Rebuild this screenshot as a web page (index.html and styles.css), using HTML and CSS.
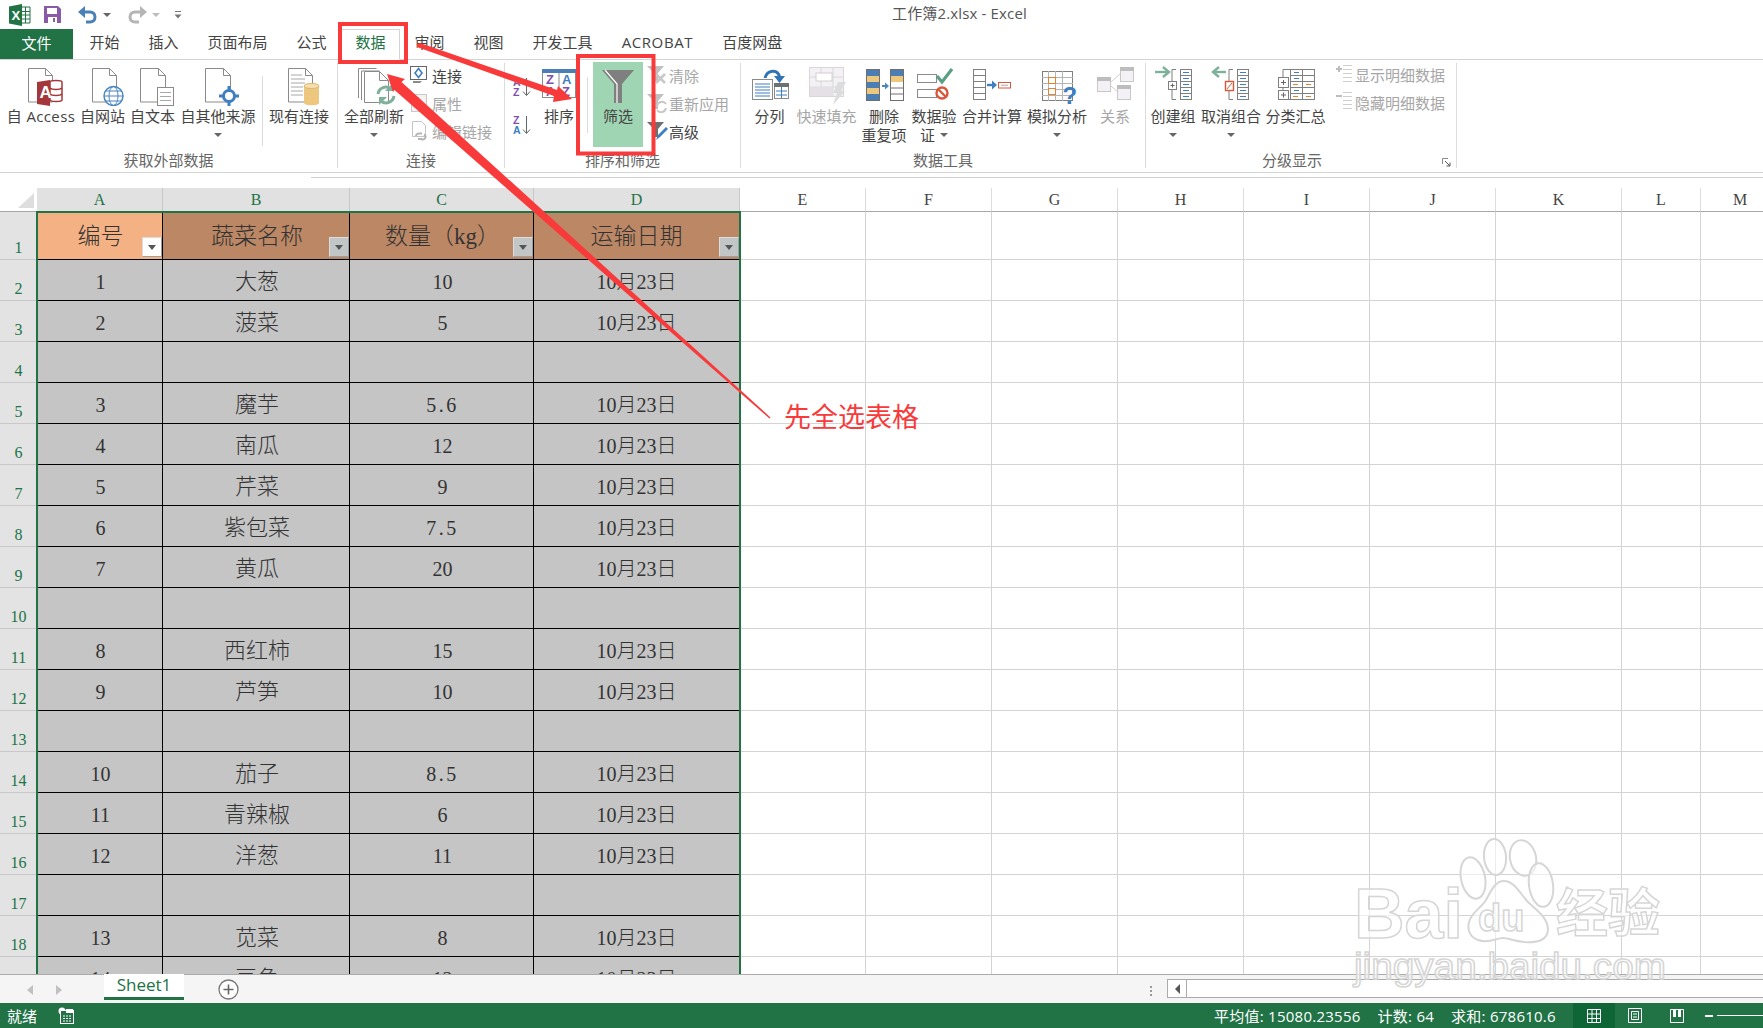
FILE: index.html
```html
<!DOCTYPE html>
<html lang="zh-CN">
<head>
<meta charset="utf-8">
<title>工作簿2.xlsx - Excel</title>
<link rel="stylesheet" href="styles.css">
</head>
<body>
<div class="app">
  <header class="titlebar">
    <div class="qat">
      <svg class="q-excel" width="22" height="22" viewBox="0 0 22 22"><path d="M0 2.5 13 0v22L0 19.500z" fill="#217346"/><path d="M13 3h8v16h-8" fill="#fff" stroke="#217346"/><path d="M13 7.500h8M13 11h8M13 15h8M16.500 3v16" stroke="#217346" fill="none"/><text x="2.500" y="15.500" class="x-mark">X</text></svg>
      <svg class="q-save" width="17" height="17" viewBox="0 0 17 17"><path d="M0 0h14l3 3v14H0z" fill="#8a5aa8"/><rect x="3" y="2" width="10" height="6" fill="#fff"/><rect x="4" y="11" width="9" height="6" fill="#fff"/><rect x="9" y="12" width="2" height="4" fill="#8a5aa8"/></svg>
      <svg class="q-undo" width="20" height="18" viewBox="0 0 20 18"><path d="M4 6h8c3 0 5 2 5 5s-2 5-5 5H8" fill="none" stroke="#4a80b8" stroke-width="3"/><path d="M7 0v12L0 6z" fill="#4a80b8"/></svg>
      <span class="mini-caret"></span>
      <svg class="q-redo" width="20" height="18" viewBox="0 0 20 18"><path d="M16 6H8c-3 0-5 2-5 5s2 5 5 5h4" fill="none" stroke="#b5b5b5" stroke-width="3"/><path d="M13 0v12l7-6z" fill="#b5b5b5"/></svg>
      <span class="mini-caret mini-caret-off"></span>
      <svg class="q-more" width="10" height="10" viewBox="0 0 10 10"><path d="M2 1.500h6" stroke="#777" fill="none"/><path d="M1.500 4.500h7L5 8.500z" fill="#777"/></svg>
    </div>
    <div class="title">工作簿2.xlsx - Excel</div>
  </header>

  <nav class="tabs">
    <span class="tab-file">文件</span>
    <span class="tab">开始</span>
    <span class="tab">插入</span>
    <span class="tab">页面布局</span>
    <span class="tab">公式</span>
    <span class="tab tab-active">数据</span>
    <span class="tab">审阅</span>
    <span class="tab">视图</span>
    <span class="tab">开发工具</span>
    <span class="tab tab-latin">ACROBAT</span>
    <span class="tab">百度网盘</span>
  </nav>

  <section class="ribbon">
    <div class="group g1">
      <div class="group-body">
        <div class="big w76">
          <svg width="44" height="40" viewBox="0 0 44 40"><path d="M9.500 2.500h17l7 7v26.500h-24z" fill="#fff" stroke="#8a8a8a"/><path d="M26.500 2.500v7h7" fill="none" stroke="#8a8a8a"/><path d="M31 16c0-2 12-2 12 0v18c0 2-12 2-12 0z" fill="#fff" stroke="#a4373a" stroke-width="1.500"/><path d="M31 22c2 2 10 2 12 0M31 28c2 2 10 2 12 0" fill="none" stroke="#a4373a" stroke-width="1.500"/><path d="M18 16l13-2v26l-13-2z" fill="#a4373a"/><text x="20.500" y="32" class="a-mark">A</text></svg>
          <span class="lbl lbl-latin">自 Access</span>
        </div>
        <div class="big w47">
          <svg width="44" height="40" viewBox="0 0 44 40"><path d="M11.500 2.500h17l7 7v26.500h-24z" fill="#fff" stroke="#8a8a8a"/><path d="M28.500 2.500v7h7" fill="none" stroke="#8a8a8a"/><circle cx="32.500" cy="30" r="9.500" fill="#fff" stroke="#4a86c0" stroke-width="1.500"/><ellipse cx="32.500" cy="30" rx="4.500" ry="9.500" fill="none" stroke="#4a86c0"/><path d="M23 30h19M24.500 25h16M24.500 35h16" stroke="#4a86c0" fill="none"/></svg>
          <span class="lbl">自网站</span>
        </div>
        <div class="big w53">
          <svg width="44" height="40" viewBox="0 0 44 40"><path d="M9.500 2.500h18l7 7v26.500h-25z" fill="#fff" stroke="#8a8a8a"/><path d="M27.500 2.500v7h7" fill="none" stroke="#8a8a8a"/><rect x="26.500" y="21.500" width="16" height="18" fill="#fff" stroke="#8a8a8a"/><path d="M29 26.500h11M29 30.500h11M29 34.500h11" stroke="#a8a8a8" fill="none"/></svg>
          <span class="lbl">自文本</span>
        </div>
        <div class="big w78">
          <svg width="44" height="40" viewBox="0 0 44 40"><path d="M9.500 2.500h18l7 7v26.500h-25z" fill="#fff" stroke="#8a8a8a"/><path d="M27.500 2.500v7h7" fill="none" stroke="#8a8a8a"/><circle cx="33" cy="30" r="5.500" fill="#fff" stroke="#3f7fbf" stroke-width="3"/><path d="M33 20v4M33 36v4M23 30h4M39 30h4" stroke="#3f7fbf" stroke-width="3" fill="none"/></svg>
          <span class="lbl">自其他来源</span>
          <span class="line2"><span class="caret"></span></span>
        </div>
        <span class="vsep sep1"></span>
        <div class="big w66">
          <svg width="44" height="40" viewBox="0 0 44 40"><path d="M11.500 2.500h17l7 7v26.500h-24z" fill="#fff" stroke="#8a8a8a"/><path d="M28.500 2.500v7h7" fill="none" stroke="#8a8a8a"/><path d="M14 9h11M14 13h14M14 17h14M14 21h12M14 25h12M14 29h12" stroke="#a8a8a8" fill="none"/><path d="M27 20c0-4 15-4 15 0v17c0 3-15 3-15 0z" fill="#eec77e"/><ellipse cx="34.500" cy="20" rx="7.500" ry="2.500" fill="#f6dfae" stroke="#c9a45f" stroke-width=".6"/></svg>
          <span class="lbl">现有连接</span>
        </div>
      </div>
      <div class="group-label">获取外部数据</div>
    </div>

    <div class="group g2">
      <div class="group-body">
        <div class="big w72">
          <svg width="44" height="40" viewBox="0 0 44 40"><path d="M6.500 32V2.500h18M9.500 34V5h18" fill="none" stroke="#8a8a8a"/><path d="M12.500 5.500h15l9 9v22h-24z" fill="#fff" stroke="#8a8a8a"/><path d="M27.500 5.500v9h9" fill="none" stroke="#8a8a8a"/><path d="M26 28a8 8 0 0 1 13-5" fill="none" stroke="#7fb09a" stroke-width="3"/><path d="M42 30a8 8 0 0 1-13 5" fill="none" stroke="#7fb09a" stroke-width="3"/><path d="M41 17v8h-8zM27 39v-8h8z" fill="#7fb09a"/></svg>
          <span class="lbl">全部刷新</span>
          <span class="line2"><span class="caret"></span></span>
        </div>
        <div class="small-col">
          <div class="small">
            <svg width="19" height="20" viewBox="0 0 19 20"><rect x=".5" y="1.500" width="16" height="13" fill="#fff" stroke="#666"/><path d="M3 16h9l-2 2H3z" fill="#8a8a8a"/><path d="M8.500 3.500l3.500 4.500-3.500 4.500L5 8z" fill="#fff" stroke="#3f7fbf" stroke-width="1.600"/></svg>
            <span>连接</span>
          </div>
          <div class="small off">
            <svg width="19" height="20" viewBox="0 0 19 20"><rect x="1.500" y="1.500" width="15" height="17" fill="#f2f2f2" stroke="#c8c8c8"/><rect x="4" y="4" width="5" height="4" fill="#bdbdbd"/><path d="M4 11h10M4 14h10" stroke="#c8c8c8" fill="none"/></svg>
            <span>属性</span>
          </div>
          <div class="small off">
            <svg width="19" height="20" viewBox="0 0 19 20"><path d="M2.500.5h9l4 4v11h-13z" fill="#fff" stroke="#c4c4c4"/><path d="M6 15a3 2.500 0 0 1 3-2.500h3M14 13.500a3 2.500 0 0 1-3 4.500H8" fill="none" stroke="#b5b5b5" stroke-width="2"/></svg>
            <span>编辑链接</span>
          </div>
        </div>
      </div>
      <div class="group-label">连接</div>
    </div>

    <div class="group g3">
      <div class="group-body">
        <div class="sort-col">
          <svg width="18" height="20" viewBox="0 0 18 20"><text x="0" y="9" class="az az-v">A</text><text x="0" y="19" class="az az-p">Z</text><path d="M13.500 1v17M10 14.500l3.500 4 3.500-4" fill="none" stroke="#666"/></svg>
          <svg width="18" height="20" viewBox="0 0 18 20"><text x="0" y="9" class="az az-p">Z</text><text x="0" y="19" class="az az-b">A</text><path d="M13.500 1v17M10 14.500l3.500 4 3.500-4" fill="none" stroke="#666"/></svg>
        </div>
        <div class="big w56">
          <svg width="36" height="40" viewBox="0 0 36 40"><rect x="1.500" y="3.500" width="33" height="28" fill="#fff" stroke="#8a8a8a"/><rect x="1" y="3" width="34" height="4" fill="#4a7eb5"/><path d="M18 7v25" stroke="#8a8a8a" fill="none"/><text x="5" y="18" class="az2 az-p">Z</text><text x="5" y="30" class="az2 az-v">A</text><text x="21" y="18" class="az2 az-b">A</text><text x="21" y="30" class="az2 az-p">Z</text></svg>
          <span class="lbl">排序</span>
        </div>
        <span class="vsep sep2"></span>
        <div class="big filter-on">
          <svg width="34" height="40" viewBox="0 0 34 40"><path d="M1 4h32L21 18v19h-8V18z" fill="#7f7f7f"/><path d="M4 4l12 14v19M17 18" fill="none" stroke="#fff" stroke-width="1.200"/></svg>
          <span class="lbl">筛选</span>
        </div>
        <div class="small-col col3">
          <div class="small off s3">
            <svg width="23" height="20" viewBox="0 0 23 20"><path d="M1 1h17l-6 7v8h-4V8z" fill="#c0c0c0"/><path d="M10 9l9 9M19 9l-9 9" stroke="#c8c8c8" stroke-width="2.500" fill="none"/></svg>
            <span>清除</span>
          </div>
          <div class="small off s3">
            <svg width="23" height="20" viewBox="0 0 23 20"><path d="M1 1h17l-6 7v8h-4V8z" fill="#c0c0c0"/><path d="M11 13a5 5 0 0 1 9-2M20 15a5 5 0 0 1-9 2" stroke="#c8c8c8" stroke-width="2" fill="none"/></svg>
            <span>重新应用</span>
          </div>
          <div class="small s3">
            <svg width="23" height="20" viewBox="0 0 23 20"><path d="M1 1h17l-6 7v8h-4V8z" fill="#6f6f6f"/><path d="M10 19l2-5 8-8 2 2-8 8z" fill="#3f7fbf"/></svg>
            <span>高级</span>
          </div>
        </div>
      </div>
      <div class="group-label">排序和筛选</div>
    </div>

    <div class="group g4">
      <div class="group-body">
        <div class="big w57">
          <svg width="44" height="40" viewBox="0 0 44 40"><rect x="4.500" y="13.500" width="20" height="20" fill="#fff" stroke="#8a8a8a"/><path d="M7 18h15M7 21h15M7 24h15M7 27h15M7 30h15" stroke="#3f7fbf" fill="none"/><rect x="26.500" y="17.500" width="14" height="15" fill="#fff" stroke="#8a8a8a"/><rect x="26" y="17" width="15" height="4" fill="#707070"/><path d="M33.500 21v11M28 25h11M28 29h11" stroke="#3f7fbf" fill="none"/><path d="M17 12c2-8 13-10 15 0" fill="none" stroke="#2f75b5" stroke-width="3"/><path d="M26 10h11l-5.500 7z" fill="#2f75b5"/></svg>
          <span class="lbl">分列</span>
        </div>
        <div class="big w57 dim">
          <svg width="44" height="40" viewBox="0 0 44 40"><rect x="4.500" y="1.500" width="34" height="29" fill="#f4f1f6" stroke="#d8d8d8"/><path d="M4 11h35M4 21h35M16 1v30M28 1v30" stroke="#d8d8d8" fill="none"/><rect x="11" y="7" width="16" height="8" fill="#fff" stroke="#d0d0d0"/><rect x="5" y="21" width="23" height="9" fill="#e4e0e6"/><path d="M33 16h8l-5 9h4l-12 14 4-12h-4z" fill="#dcdcdc"/></svg>
          <span class="lbl">快速填充</span>
        </div>
        <div class="big w58">
          <svg width="44" height="40" viewBox="0 0 44 40"><rect x="4.500" y="3.500" width="13" height="31" fill="#4a7eb5" stroke="#6f6f6f"/><rect x="5" y="10" width="12" height="6" fill="#eec77e"/><rect x="5" y="22" width="12" height="6" fill="#eec77e"/><rect x="28.500" y="3.500" width="13" height="31" fill="#fff" stroke="#6f6f6f"/><rect x="29" y="4" width="12" height="6" fill="#4a7eb5"/><rect x="29" y="10" width="12" height="6" fill="#eec77e"/><path d="M29 22h12M29 28h12" stroke="#6f6f6f" fill="none"/><path d="M20 20h4" stroke="#4a86c0" stroke-width="2" fill="none"/><path d="M23 16.500l4 3.500-4 3.500z" fill="#4a86c0"/></svg>
          <span class="lbl">删除</span>
          <span class="lbl">重复项</span>
        </div>
        <div class="big w42">
          <svg width="44" height="40" viewBox="0 0 44 40"><rect x="5.500" y="8.500" width="19" height="8" fill="#fff" stroke="#8a8a8a"/><rect x="5.500" y="23.500" width="19" height="8" fill="#fff" stroke="#8a8a8a"/><path d="M25 10l5 6 10-13" fill="none" stroke="#5a9e84" stroke-width="3.200"/><circle cx="30" cy="27" r="5.500" fill="#fff" stroke="#d9583b" stroke-width="2.400"/><path d="M26 23l8 8" stroke="#d9583b" stroke-width="2.400" fill="none"/></svg>
          <span class="lbl">数据验</span>
          <span class="line2"><span class="lbl">证</span><span class="caret caret-in"></span></span>
        </div>
        <div class="big w74">
          <svg width="44" height="40" viewBox="0 0 44 40"><rect x="3.500" y="3.500" width="12" height="30" fill="#fff" stroke="#7f7f7f"/><path d="M3 9.500h13M3 15.500h13M3 21.500h13M3 27.500h13" stroke="#7f7f7f" fill="none"/><path d="M17 19h6" stroke="#3f7fbf" stroke-width="2.400" fill="none"/><path d="M22 14.500l5 4.500-5 4.500z" fill="#3f7fbf"/><rect x="28.500" y="16.500" width="12" height="5.500" fill="#fff" stroke="#d9583b"/><path d="M31 19.200h7" stroke="#a8a8a8" fill="none"/></svg>
          <span class="lbl">合并计算</span>
        </div>
        <div class="big w56">
          <svg width="44" height="40" viewBox="0 0 44 40"><rect x="7.500" y="5.500" width="30" height="29" fill="#fff" stroke="#7f7f7f"/><path d="M7 11.500h31M7 17.500h31M7 23.500h31M7 29.500h31M13.500 5v30M20.500 5v30M27.500 5v30" stroke="#b5b5b5" fill="none"/><rect x="13.500" y="11.500" width="7" height="6" fill="#fff" stroke="#e3822f"/><rect x="13.500" y="22.500" width="7" height="6" fill="#fff" stroke="#e3822f"/><text x="27.500" y="38" class="qmark">?</text></svg>
          <span class="lbl">模拟分析</span>
          <span class="line2"><span class="caret"></span></span>
        </div>
        <div class="big w60 dim">
          <svg width="44" height="40" viewBox="0 0 44 40"><path d="M18 16l9-8M18 20l7 6" stroke="#d0d0d0" fill="none"/><rect x="4.500" y="11.500" width="13" height="14" fill="#f4f1f6" stroke="#c8c8c8"/><rect x="4" y="11" width="14" height="4" fill="#bdbdbd"/><rect x="27.500" y="1.500" width="13" height="14" fill="#f4f1f6" stroke="#c8c8c8"/><rect x="27" y="1" width="14" height="4" fill="#bdbdbd"/><rect x="24.500" y="19.500" width="13" height="14" fill="#f4f1f6" stroke="#c8c8c8"/><rect x="24" y="19" width="14" height="4" fill="#bdbdbd"/></svg>
          <span class="lbl">关系</span>
        </div>
      </div>
      <div class="group-label">数据工具</div>
    </div>

    <div class="group g5">
      <div class="group-body">
        <div class="big w54">
          <svg width="44" height="40" viewBox="0 0 44 40"><path d="M4 6h12" stroke="#7fb09a" stroke-width="2.400" fill="none"/><path d="M12 1l6 5-6 5" stroke="#7fb09a" stroke-width="2.400" fill="none"/><path d="M25 3.500h-4v30h4" stroke="#7f7f7f" fill="none"/><rect x="17.500" y="15.500" width="8" height="8" fill="#fff" stroke="#7f7f7f"/><path d="M19.500 19.500h4M21.500 17.500v4" stroke="#666" fill="none"/><rect x="29.500" y="3.500" width="11" height="30" fill="#fff" stroke="#7f7f7f"/><path d="M29 9.500h12M29 15.500h12M29 21.500h12M29 27.500h12" stroke="#7f7f7f" fill="none"/><path d="M32 6.500h6M32 12.500h6M32 18.500h6M32 24.500h6M32 30.500h6" stroke="#3f7fbf" fill="none"/></svg>
          <span class="lbl">创建组</span>
          <span class="line2"><span class="caret"></span></span>
        </div>
        <div class="big w62">
          <svg width="44" height="40" viewBox="0 0 44 40"><path d="M6 6h11" stroke="#7fb09a" stroke-width="2.400" fill="none"/><path d="M10 1L4 6l6 5" stroke="#7fb09a" stroke-width="2.400" fill="none"/><path d="M24 3.500h-4v30h4" stroke="#7f7f7f" fill="none"/><rect x="16.500" y="15.500" width="8" height="9" fill="#fff" stroke="#d9583b" stroke-width="1.400"/><path d="M18 23l5-6" stroke="#d9583b" fill="none"/><rect x="28.500" y="3.500" width="11" height="30" fill="#fff" stroke="#7f7f7f"/><path d="M28 9.500h12M28 15.500h12M28 21.500h12M28 27.500h12" stroke="#7f7f7f" fill="none"/><path d="M31 6.500h6M31 12.500h6M31 18.500h6M31 24.500h6M31 30.500h6" stroke="#3f7fbf" fill="none"/></svg>
          <span class="lbl">取消组合</span>
          <span class="line2"><span class="caret"></span></span>
        </div>
        <div class="big w67">
          <svg width="44" height="40" viewBox="0 0 44 40"><path d="M16 3.500H9v8M9 21v3M9 33.500h7" stroke="#7f7f7f" fill="none"/><rect x="4.500" y="11.500" width="10" height="10" fill="#fff" stroke="#7f7f7f"/><path d="M7 16.500h5M9.500 14v5" stroke="#666" fill="none"/><rect x="4.500" y="24.500" width="10" height="9" fill="#fff" stroke="#7f7f7f"/><path d="M7 29h5M9.500 26.500v5" stroke="#666" fill="none"/><rect x="16.500" y="3.500" width="24" height="30" fill="#fff" stroke="#7f7f7f"/><path d="M16 9.500h25M16 15.500h25M16 21.500h25M16 27.500h25M28.500 3v31" stroke="#7f7f7f" fill="none"/><path d="M20 6.500h5M20 12.500h5M20 24.500h5" stroke="#3f7fbf" fill="none"/><path d="M19 18.500h5M32 18.500h5M19 30.500h5M32 30.500h5" stroke="#e3822f" fill="none"/></svg>
          <span class="lbl">分类汇总</span>
        </div>
        <div class="small-col col5">
          <div class="small off s5">
            <svg width="20" height="20" viewBox="0 0 20 20"><path d="M2 4h6M5 1v6" stroke="#bdbdbd" stroke-width="2" fill="none"/><path d="M9 .5h9M9 4.500h9M9 8.500h9M9 12.500h9M9 16.500h9" stroke="#cfcfcf" fill="none"/></svg>
            <span>显示明细数据</span>
          </div>
          <div class="small off s5">
            <svg width="20" height="20" viewBox="0 0 20 20"><path d="M2 4h6" stroke="#bdbdbd" stroke-width="2" fill="none"/><path d="M9 .5h9M9 4.500h9M9 8.500h9M9 12.500h9M9 16.500h9" stroke="#cfcfcf" fill="none"/></svg>
            <span>隐藏明细数据</span>
          </div>
        </div>
      </div>
      <div class="group-label">分级显示</div>
      <svg class="launcher" width="9" height="9" viewBox="0 0 9 9"><path d="M.5 6V.5H6" fill="none" stroke="#8a8a8a"/><path d="M3 3l5 5M8 4.500V8H4.500" fill="none" stroke="#555"/></svg>
    </div>
  </section>

  <div class="formula-gap"><div class="formula-line"></div></div>

  <main class="sheet">
    <table class="grid">
      <colgroup>
        <col class="c-rh"><col class="c-a"><col class="c-b"><col class="c-c"><col class="c-d">
        <col class="c-std"><col class="c-std"><col class="c-std"><col class="c-std"><col class="c-std"><col class="c-std"><col class="c-std"><col class="c-l"><col class="c-l">
      </colgroup>
      <thead>
        <tr class="r-col">
          <th class="corner"></th>
          <th class="ch ch-on">A</th><th class="ch ch-on">B</th><th class="ch ch-on">C</th><th class="ch ch-on">D</th>
          <th class="ch">E</th><th class="ch">F</th><th class="ch">G</th><th class="ch">H</th><th class="ch">I</th><th class="ch">J</th><th class="ch">K</th><th class="ch">L</th><th class="ch">M</th>
        </tr>
      </thead>
      <tbody>
        <tr class="r-head"><th class="rh">1</th>
          <td class="hd hd-a">编号<span class="fbtn fbtn-w"></span></td>
          <td class="hd">蔬菜名称<span class="fbtn"></span></td>
          <td class="hd">数量（kg）<span class="fbtn"></span></td>
          <td class="hd">运输日期<span class="fbtn"></span></td>
          <td></td><td></td><td></td><td></td><td></td><td></td><td></td><td></td><td></td></tr>
        <tr><th class="rh">2</th><td class="d">1</td><td class="d">大葱</td><td class="d">10</td><td class="d">10月23日</td><td></td><td></td><td></td><td></td><td></td><td></td><td></td><td></td><td></td></tr>
        <tr><th class="rh">3</th><td class="d">2</td><td class="d">菠菜</td><td class="d">5</td><td class="d">10月23日</td><td></td><td></td><td></td><td></td><td></td><td></td><td></td><td></td><td></td></tr>
        <tr><th class="rh">4</th><td class="d"></td><td class="d"></td><td class="d"></td><td class="d"></td><td></td><td></td><td></td><td></td><td></td><td></td><td></td><td></td><td></td></tr>
        <tr><th class="rh">5</th><td class="d">3</td><td class="d">魔芋</td><td class="d dec">5.6</td><td class="d">10月23日</td><td></td><td></td><td></td><td></td><td></td><td></td><td></td><td></td><td></td></tr>
        <tr><th class="rh">6</th><td class="d">4</td><td class="d">南瓜</td><td class="d">12</td><td class="d">10月23日</td><td></td><td></td><td></td><td></td><td></td><td></td><td></td><td></td><td></td></tr>
        <tr><th class="rh">7</th><td class="d">5</td><td class="d">芹菜</td><td class="d">9</td><td class="d">10月23日</td><td></td><td></td><td></td><td></td><td></td><td></td><td></td><td></td><td></td></tr>
        <tr><th class="rh">8</th><td class="d">6</td><td class="d">紫包菜</td><td class="d dec">7.5</td><td class="d">10月23日</td><td></td><td></td><td></td><td></td><td></td><td></td><td></td><td></td><td></td></tr>
        <tr><th class="rh">9</th><td class="d">7</td><td class="d">黄瓜</td><td class="d">20</td><td class="d">10月23日</td><td></td><td></td><td></td><td></td><td></td><td></td><td></td><td></td><td></td></tr>
        <tr><th class="rh">10</th><td class="d"></td><td class="d"></td><td class="d"></td><td class="d"></td><td></td><td></td><td></td><td></td><td></td><td></td><td></td><td></td><td></td></tr>
        <tr><th class="rh">11</th><td class="d">8</td><td class="d">西红柿</td><td class="d">15</td><td class="d">10月23日</td><td></td><td></td><td></td><td></td><td></td><td></td><td></td><td></td><td></td></tr>
        <tr><th class="rh">12</th><td class="d">9</td><td class="d">芦笋</td><td class="d">10</td><td class="d">10月23日</td><td></td><td></td><td></td><td></td><td></td><td></td><td></td><td></td><td></td></tr>
        <tr><th class="rh">13</th><td class="d"></td><td class="d"></td><td class="d"></td><td class="d"></td><td></td><td></td><td></td><td></td><td></td><td></td><td></td><td></td><td></td></tr>
        <tr><th class="rh">14</th><td class="d">10</td><td class="d">茄子</td><td class="d dec">8.5</td><td class="d">10月23日</td><td></td><td></td><td></td><td></td><td></td><td></td><td></td><td></td><td></td></tr>
        <tr><th class="rh">15</th><td class="d">11</td><td class="d">青辣椒</td><td class="d">6</td><td class="d">10月23日</td><td></td><td></td><td></td><td></td><td></td><td></td><td></td><td></td><td></td></tr>
        <tr><th class="rh">16</th><td class="d">12</td><td class="d">洋葱</td><td class="d">11</td><td class="d">10月23日</td><td></td><td></td><td></td><td></td><td></td><td></td><td></td><td></td><td></td></tr>
        <tr><th class="rh">17</th><td class="d"></td><td class="d"></td><td class="d"></td><td class="d"></td><td></td><td></td><td></td><td></td><td></td><td></td><td></td><td></td><td></td></tr>
        <tr><th class="rh">18</th><td class="d">13</td><td class="d">苋菜</td><td class="d">8</td><td class="d">10月23日</td><td></td><td></td><td></td><td></td><td></td><td></td><td></td><td></td><td></td></tr>
        <tr><th class="rh">19</th><td class="d">14</td><td class="d">豆角</td><td class="d">12</td><td class="d">10月23日</td><td></td><td></td><td></td><td></td><td></td><td></td><td></td><td></td><td></td></tr>
      </tbody>
    </table>
    <div class="selection"></div>
  </main>

  <div class="sheetbar">
    <span class="nav-arrow nav-left"></span>
    <span class="nav-arrow nav-right"></span>
    <span class="sheet-tab">Sheet1</span>
    <svg class="add-sheet" width="21" height="21" viewBox="0 0 21 21"><circle cx="10.500" cy="10.500" r="9.500" fill="#fff" stroke="#777" stroke-width="1.300"/><path d="M5.500 10.500h10M10.500 5.500v10" stroke="#666" stroke-width="1.600" fill="none"/></svg>
    <span class="dots"></span>
    <div class="hscroll"><span class="hscroll-btn"><span class="hscroll-arrow"></span></span></div>
  </div>

  <footer class="status">
    <span class="ready">就绪</span>
    <svg class="macro" width="16" height="17" viewBox="0 0 16 17"><circle cx="4" cy="4" r="3.500" fill="#fff"/><rect x="2.500" y="3.500" width="13" height="13" fill="#217346" stroke="#fff"/><rect x="8" y="2" width="7" height="4" fill="#fff"/><path d="M5 9h2M8 9h2M11 9h2M5 11.500h2M8 11.500h2M11 11.500h2M5 14h2M8 14h2M11 14h2" stroke="#fff" fill="none"/></svg>
    <div class="stats">
      <span>平均值: 15080.23556</span>
      <span>计数: 64</span>
      <span>求和: 678610.6</span>
    </div>
    <div class="views">
      <span class="view view-on"><svg width="14" height="14" viewBox="0 0 14 14"><path d="M.5.500h13v13H.5zM.5 5h13M.5 9.500h13M5 .5v13M9.500.5v13" fill="none" stroke="#fff"/></svg></span>
      <span class="view"><svg width="14" height="15" viewBox="0 0 14 15"><path d="M.5.500h13v14H.5z" fill="none" stroke="#fff"/><path d="M3.500 3.500h7v8h-7zM5 6h4M5 9h4" fill="none" stroke="#fff"/></svg></span>
      <span class="view"><svg width="14" height="14" viewBox="0 0 14 14"><path d="M.5.500h13v13H.5z" fill="none" stroke="#fff"/><path d="M3 0h3v8H3zM8 0h3v8H8z" fill="#fff"/></svg></span>
    </div>
    <span class="zoom-minus"></span>
    <span class="zoom-track"></span>
  </footer>

  <svg class="watermark" width="1763" height="1028" viewBox="0 0 1763 1028">
    <g class="wm">
      <ellipse cx="1473" cy="878" rx="12" ry="21" transform="rotate(-12 1473 878)"/>
      <ellipse cx="1495" cy="857" rx="11" ry="18" transform="rotate(-5 1495 857)"/>
      <ellipse cx="1523" cy="858" rx="13" ry="18" transform="rotate(-12 1523 858)"/>
      <ellipse cx="1541" cy="885" rx="12" ry="22" transform="rotate(-8 1541 885)"/>
      <path d="M1504 881c9 0 14 9 23 20 9 9 20 15 21 28 0 11-10 14-24 13-10-1-16-4-21-4-7 0-14 6-25 2-8-3-11-10-9-18 2-9 12-14 17-22 5-9 9-19 18-19z"/>
      <text x="1354" y="938" class="wm-bai">Bai</text>
      <text x="1478" y="931" class="wm-du">du</text>
      <text x="1556" y="932" class="wm-cn">经验</text>
      <text x="1354" y="979" class="wm-url" textLength="312" lengthAdjust="spacingAndGlyphs">jingyan.baidu.com</text>
    </g>
  </svg>

  <svg class="marks" width="1763" height="1028" viewBox="0 0 1763 1028">
    <rect class="mark-box" x="340" y="24" width="66" height="38"/>
    <rect class="mark-box" x="578" y="56" width="75.500" height="97.500"/>
    <polygon class="mark-fill" points="417,44 420,43 557,90 558,86 572,99 553,102 554,96 417,47"/>
    <polygon class="mark-fill" points="387,74 405,79 401.500,82 770.500,417.500 769.500,418.500 394.500,90 393,92"/>
  </svg>
  <div class="annotation">先全选表格</div>
</div>
</body>
</html>
```

FILE: styles.css
```css
* { box-sizing: border-box; }
html, body { margin: 0; padding: 0; }
body { background: #fff; overflow: hidden; }
.app {
  position: relative;
  width: 1763px;
  height: 1028px;
  overflow: hidden;
  font-family: "Open Sans", "Noto Sans CJK SC", sans-serif;
  font-size: 15px;
  color: #444;
  display: flex;
  flex-direction: column;
}

/* title bar */
.titlebar { height: 29px; display: flex; align-items: center; flex: none; }
.qat { width: 892px; display: flex; align-items: center; padding-left: 9px; }
.q-save { margin-left: 13px; }
.q-undo { margin-left: 17px; }
.q-redo { margin-left: 16px; }
.q-more { margin-left: 13px; }
.mini-caret { width: 0; height: 0; margin-left: 5px; border: 4px solid transparent; border-top: 4px solid #666; border-bottom: 0; }
.mini-caret-off { border-top-color: #bdbdbd; }
.title { color: #555; line-height: 20px; white-space: nowrap; margin-top: -4px; letter-spacing: .15px; }
.x-mark { font: bold 13px "Liberation Sans", sans-serif; fill: #fff; }
.a-mark { font: bold 17px "Liberation Sans", sans-serif; fill: #fff; }

/* tabs */
.tabs { height: 31px; flex: none; display: flex; border-bottom: 1px solid #d4d4d4; }
.tab-file { width: 73px; height: 30px; background: #217346; color: #fff; text-align: center; line-height: 29px; margin-right: 2px; }
.tab { padding: 0 14.5px; line-height: 27px; color: #444; white-space: nowrap; height: 31px; }
.tab-latin { letter-spacing: .6px; }
.tab-active { color: #217346; border: 1px solid #d4d4d4; border-bottom: 1px solid #fff; padding: 0 13.500px; line-height: 25px; }

/* ribbon */
.ribbon { height: 113px; flex: none; display: flex; padding-top: 3px; border-bottom: 1px solid #d4d4d4; }
.group { position: relative; height: 105px; display: flex; flex-direction: column; border-right: 1px solid #dcdcdc; flex: none; }
.g1 { width: 338px; }
.g2 { width: 167px; }
.g3 { width: 236px; }
.g4 { width: 405px; }
.g5 { width: 311px; }
.group-body { flex: 1; display: flex; min-height: 0; }
.group-label { height: 18px; line-height: 18px; margin-bottom: -1px; text-align: center; color: #666; white-space: nowrap; }
.launcher { position: absolute; right: 5px; bottom: 1px; }

.big { display: flex; flex-direction: column; align-items: center; padding-top: 3px; flex: none; }
.big svg { display: block; flex: none; margin-bottom: 1px; }
.lbl { line-height: 18px; white-space: nowrap; }
.lbl-latin { letter-spacing: .35px; }
.lbl + .lbl, .lbl + .line2 { margin-top: 1px; }
.line2 { height: 18px; display: flex; align-items: center; justify-content: center; }
.caret { width: 0; height: 0; border: 4px solid transparent; border-top: 4px solid #666; border-bottom: 0; }
.caret-in { margin-left: 5px; }
.w76 { width: 79px; padding-left: 3px; }
.w42 { width: 42px; }
.w47 { width: 47px; }
.w53 { width: 53px; }
.w54 { width: 54px; }
.w56 { width: 56px; }
.w57 { width: 57px; }
.w58 { width: 58px; }
.w60 { width: 60px; }
.w62 { width: 62px; }
.w66 { width: 66px; }
.w67 { width: 67px; }
.w72 { width: 72px; }
.w74 { width: 74px; }
.w78 { width: 78px; }
.dim { color: #a6a6a6; }

.vsep { width: 1px; background: #dcdcdc; flex: none; }
.sep1 { height: 70px; margin: 13px 3px 0 5px; }
.sep2 { height: 56px; margin: 14px 5px 0 0; }

.small-col { display: flex; flex-direction: column; margin-top: -2px; }
.small { height: 28px; display: flex; align-items: center; gap: 3px; white-space: nowrap; flex: none; }
.small svg { flex: none; }
.off { color: #a6a6a6; }
.col3 { margin-left: 3px; }
.col5 { margin-left: 5px; }
.s3 { gap: 0; }
.s5 { height: 27.500px; gap: 1px; }
.g5 .group-label { padding-right: 18px; }
.filter-on { width: 50px; height: 85px; margin-top: -1px; background: #9fd5b3; padding-top: 4px; }

.sort-col { width: 18px; margin-left: 8px; padding-top: 14px; display: flex; flex-direction: column; gap: 18px; flex: none; }
.az { font: bold 10.500px "Liberation Sans", sans-serif; }
.az2 { font: bold 13px "Liberation Sans", sans-serif; }
.az-v { fill: #7f5aa8; }
.az-p { fill: #7f4fae; }
.az-b { fill: #3f7fbf; }
.qmark { font: bold 24px "Liberation Sans", sans-serif; fill: #3f7fbf; }

.formula-gap { height: 15px; flex: none; padding: 4px 0 0 311px; }
.formula-line { border-top: 1px solid #d0d0d0; }

/* sheet */
.sheet { position: relative; height: 786px; flex: none; overflow: hidden; }
.grid { border-collapse: separate; border-spacing: 0; table-layout: fixed; width: 1780px; }
.c-rh { width: 37px; }
.c-a { width: 126px; }
.c-b { width: 187px; }
.c-c { width: 184px; }
.c-d { width: 206px; }
.c-std { width: 126px; }
.c-l { width: 79px; }
.grid td, .grid th { padding: 0; box-sizing: border-box; }
.grid td { height: 41px; border-right: 1px solid #d4d4d4; border-bottom: 1px solid #d4d4d4; }
.r-col { height: 24px; }
.corner { background: #fff; position: relative; border-bottom: 1px solid #a8a8a8; }
.corner::after {
  content: "";
  position: absolute;
  right: 3px;
  bottom: 3px;
  border-style: solid;
  border-width: 0 0 15px 16px;
  border-color: transparent transparent #dedede transparent;
}
.ch {
  height: 24px;
  font: normal 16px/22px "Liberation Serif", serif;
  color: #444;
  text-align: center;
  vertical-align: bottom;
  border-right: 1px solid #dcdcdc;
  border-bottom: 1px solid #a8a8a8;
  background: #fff;
}
.ch-on { background: #e1e1e1; color: #217346; border-right-color: #c8c8c8; border-bottom-color: #217346; }
.rh {
  background: #e3e3e3;
  font: normal 16px/20px "Liberation Serif", serif;
  color: #217346;
  text-align: center;
  vertical-align: bottom;
  border-bottom: 1px solid #c8c8c8;
}
.grid .rh { padding-bottom: 1px; }
.r-head td { height: 48px; }
.grid .hd {
  position: relative;
  background: #bc8764;
  font: 300 23px/28px "Liberation Serif", "Noto Sans CJK SC", serif;
  color: #333;
  text-align: center;
  padding-top: 2px;
  border-right-color: #000;
  border-bottom-color: #000;
}
.grid .hd-a { background: #f4b183; }
.grid td:nth-child(2), .grid td:nth-child(3), .grid td:nth-child(4) { padding-left: 2px; }
.fbtn {
  position: absolute;
  right: 0;
  bottom: 2px;
  width: 20px;
  height: 20px;
  background: #c2c6c6;
  border: 1px solid #9a9a9a;
  border-color: #dcdcdc #a0a0a0 #a0a0a0 #dcdcdc;
}
.fbtn-w { background: #fdfdfd; }
.fbtn::after {
  content: "";
  position: absolute;
  left: 5px;
  top: 7px;
  border: 4px solid transparent;
  border-top: 5px solid #555;
  border-bottom: 0;
}
.grid .d {
  background: #c5c5c5;
  font: 300 20px/28px "Liberation Serif", "Noto Sans CJK SC", serif;
  color: #333;
  text-align: center;
  padding-top: 3px;
  border-right-color: #000;
  border-bottom-color: #000;
}
.grid .d:nth-child(3) { font-size: 22px; }
.grid .dec { letter-spacing: 2.500px; }
.selection { position: absolute; left: 36px; top: 23px; width: 705px; height: 800px; border: 2px solid #217346; pointer-events: none; }

/* sheet bar */
.sheetbar { height: 29px; flex: none; background: #f5f5f5; border-top: 1px solid #ababab; display: flex; align-items: flex-start; position: relative; z-index: 1; }
.sheetbar > * { flex: none; }
.nav-arrow { width: 0; height: 0; margin-top: 10px; border: 5px solid transparent; }
.nav-left { border-right: 6px solid #c0c0c0; border-left: 0; margin-left: 27px; }
.nav-right { border-left: 6px solid #c0c0c0; border-right: 0; margin-left: 23px; }
.sheet-tab {
  width: 80px;
  height: 26px;
  margin: -1px 0 0 42px;
  background: #fff;
  border-bottom: 3px solid #217346;
  color: #217346;
  font-size: 17px;
  line-height: 21px;
  text-align: center;
}
.add-sheet { margin: 4px 0 0 34px; }
.dots { width: 2px; height: 2px; margin: 11px 0 0 911px; background: #999; box-shadow: 0 4px #999, 0 8px #999; }
.hscroll { width: 620px; height: 19px; margin: 4px 0 0 15px; background: #fff; border: 1px solid #ababab; }
.hscroll-btn { display: flex; align-items: center; justify-content: center; width: 19px; height: 17px; border-right: 1px solid #ababab; }
.hscroll-arrow { width: 0; height: 0; border: 5px solid transparent; border-right: 5px solid #555; border-left: 0; }

/* status */
.status { height: 25px; flex: none; background: #217346; color: #fff; display: flex; align-items: center; position: relative; z-index: 1; }
.ready { margin-left: 7px; line-height: 20px; }
.macro { margin-left: 21px; }
.stats { display: flex; gap: 17px; margin-left: 1140px; width: 344px; white-space: nowrap; letter-spacing: .25px; flex: none; }
.views { display: flex; margin-left: 15px; flex: none; }
.view { width: 41.500px; height: 25px; display: flex; align-items: center; justify-content: center; }
.view-on { background: #0e6535; }
.zoom-minus { width: 8px; height: 2px; margin-left: 7px; background: #fff; flex: none; }
.zoom-track { flex: 1; height: 1px; margin-left: 4px; background: #fff; }

/* overlays */
.watermark, .marks { position: absolute; left: 0; top: 0; pointer-events: none; }
.watermark { z-index: 2; }
.marks { z-index: 3; }
.wm ellipse, .wm path { fill: rgba(255, 255, 255, .55); stroke: #d6d6d6; stroke-width: 2; }
.wm text { fill: rgba(255, 255, 255, .6); stroke: #d6d6d6; stroke-width: 1.500; }
.wm-bai { font: bold 70px "Liberation Sans", sans-serif; }
.wm-du { font: bold 38px "Liberation Sans", sans-serif; }
.wm-cn { font: bold 52px "Noto Sans CJK SC", sans-serif; }
.wm-url { font: 36px "Liberation Sans", sans-serif; }
.mark-box { fill: none; stroke: #f93a3a; stroke-width: 4; }
.mark-fill { fill: #f93a3a; }
.annotation {
  position: absolute;
  left: 784px;
  top: 396px;
  z-index: 3;
  font: 27px/40px "Noto Sans CJK SC", sans-serif;
  color: #f93a3a;
  white-space: nowrap;
}
```
